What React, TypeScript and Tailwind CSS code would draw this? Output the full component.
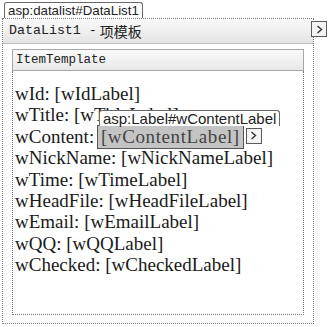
const rows: [string, string][] = [
  ["wId", "wIdLabel"],
  ["wTitle", "wTitleLabel"],
  ["wContent", "wContentLabel"],
  ["wNickName", "wNickNameLabel"],
  ["wTime", "wTimeLabel"],
  ["wHeadFile", "wHeadFileLabel"],
  ["wEmail", "wEmailLabel"],
  ["wQQ", "wQQLabel"],
  ["wChecked", "wCheckedLabel"],
];

const ArrowButton: React.FC<{ className?: string }> = ({ className }) => (
  <div
    className={
      "flex items-center justify-center border border-[#5a5a5a] bg-[#f4f4f4] " +
      (className ?? "")
    }
  >
    <svg width="7" height="9" viewBox="0 0 7 9">
      <path d="M1.5 1 L5.5 4.5 L1.5 8" fill="none" stroke="#333" strokeWidth="1.4" />
    </svg>
  </div>
);

export default function App() {
  return (
    <div className="relative w-[330px] h-[327px] overflow-hidden bg-white">
      {/* tag */}
      <div className="pl-[4px] pt-[2px] flex">
        <div className="h-[16px] border border-b-0 border-[#6a6a6a] rounded-t-[3px] bg-white px-[3px] text-[13.3px] leading-[15px] text-[#222] font-['Liberation_Sans',sans-serif]">
          asp:datalist#DataList1
        </div>
      </div>

      {/* outer frame */}
      <div className="ml-[2px] w-[312px] h-[306px] border border-dotted border-[#777] flex flex-col">
        <div className="h-[25px] shrink-0 border-b border-[#bdbdbd] bg-gradient-to-b from-[#fafafa] to-[#e4e4e4] flex items-center pl-[6px] text-[13.3px] text-[#222] font-['Liberation_Mono','Noto_Sans_CJK_SC',monospace]">
          DataList1 - <span className="ml-[3px] text-[14px] font-['Noto_Sans_CJK_SC',sans-serif]">项模板</span>
        </div>

        <div className="flex-1 pt-[5px] pl-[9px] pr-[9px] pb-[8px] flex flex-col">
          <div className="h-[22px] shrink-0 border border-[#a8a8a8] bg-gradient-to-b from-[#fafafa] to-[#e8e8e8] flex items-center pl-[3px] text-[12.5px] text-[#222] font-['Liberation_Mono',monospace]">
            ItemTemplate
          </div>
          <div className="flex-1 border border-t-0 border-dotted border-[#777] pl-[2px] pt-[12px] font-['Liberation_Serif',serif] text-[19px] text-[#1a1a1a]">
            {rows.map(([name, label]) => (
              <div key={name} className="h-[21.4px] leading-[21.4px] whitespace-nowrap">
                {name}:{" "}
                {name === "wContent" ? (
                  <>
                    <span className="relative inline-block align-top -mt-[1px] -ml-[2px] h-[24px] bg-[#c4c4c4] border border-[#555] px-[3px] leading-[22px] tracking-[0.6px] text-[#444]">
                      [{label}]
                      <span className="absolute left-[1px] bottom-full h-[16px] border border-b-0 border-[#6a6a6a] rounded-t-[3px] bg-white px-[3px] text-[15px] leading-[15px] tracking-normal text-[#222] font-['Liberation_Sans',sans-serif]">
                        asp:Label#wContentLabel
                      </span>
                    </span>
                    <ArrowButton className="inline-flex align-top mt-[2px] ml-[2px] w-[16px] h-[16px]" />
                  </>
                ) : (
                  <>[{label}]</>
                )}
              </div>
            ))}
          </div>
        </div>
      </div>

      {/* header smart-tag button */}
      <ArrowButton className="absolute left-[311px] top-[21px] w-[16px] h-[16px]" />
    </div>
  );
}
